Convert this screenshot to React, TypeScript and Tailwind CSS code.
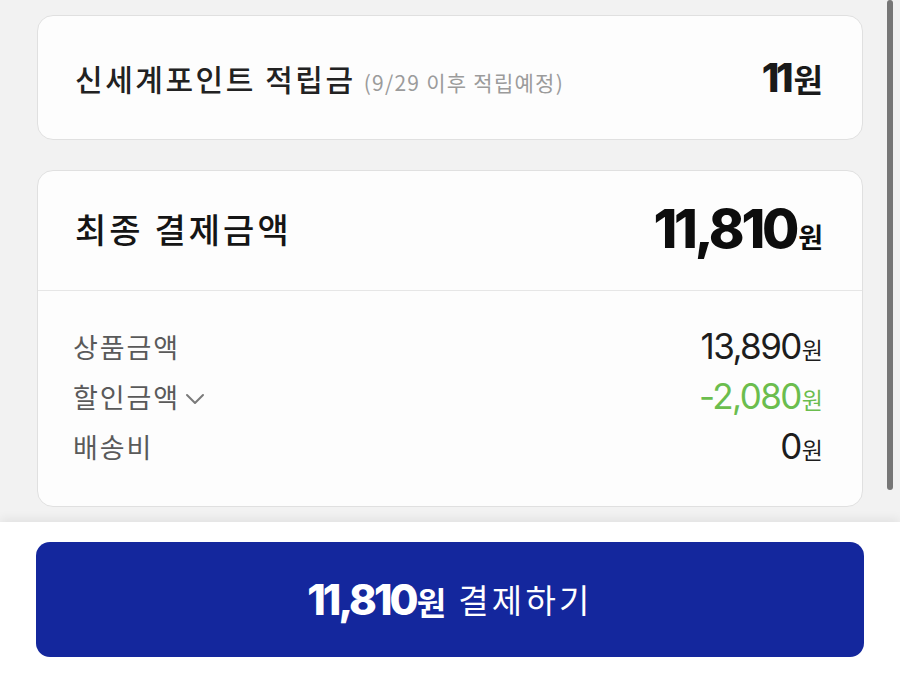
import React from "react";

const kr = { fontFamily: '"Noto Sans CJK KR", "Noto Sans", sans-serif' };
const num = { fontFamily: 'Inter, "Noto Sans CJK KR", sans-serif' };

function Won({ className }: { className: string }) {
  return (
    <span className={className} style={kr}>
      원
    </span>
  );
}

function Row({
  label,
  value,
  green,
  chevron,
}: {
  label: string;
  value: string;
  green?: boolean;
  chevron?: boolean;
}) {
  const color = green ? "text-[#6bbd4e]" : "text-[#1d1d1d]";
  return (
    <div className="flex h-[50px] items-center justify-between">
      <div
        className="flex items-center text-[27px] leading-none tracking-[0.07em] text-[#5a5a5a]"
        style={kr}
      >
        <span>{label}</span>
        {chevron && (
          <svg width="22" height="14" viewBox="0 0 22 14" className="ml-[4px] mt-[6px]">
            <polyline
              points="3,3 11,11 19,3"
              fill="none"
              stroke="#7a7a7a"
              strokeWidth="2"
              strokeLinecap="round"
              strokeLinejoin="round"
            />
          </svg>
        )}
      </div>
      <div className={`flex items-baseline ${color}`}>
        <span className="text-[35px] leading-none tracking-[-0.045em]" style={num}>
          {value}
        </span>
        <Won className="ml-[1px] text-[23px] leading-none" />
      </div>
    </div>
  );
}

export default function App() {
  return (
    <div className="relative flex h-[676px] w-[900px] flex-col overflow-hidden bg-[#f2f2f2]">
      <div className="flex flex-1 flex-col gap-[30px] pl-[37px] pr-[37px] pt-[15px]">
        <div className="flex h-[125px] items-center justify-between rounded-[16px] border border-[#e0e0e0] bg-[#fdfdfd] pl-[37px] pr-[39px]">
          <div className="flex items-baseline" style={kr}>
            <span className="text-[30px] font-medium leading-none tracking-[0.085em] text-[#222]">
              신세계포인트 적립금
            </span>
            <span className="ml-[8px] text-[21px] leading-none tracking-[0.06em] text-[#9b9b9b]">
              (9/29 이후 적립예정)
            </span>
          </div>
          <div className="flex items-baseline text-[#1a1a1a]">
            <span className="text-[40px] font-extrabold leading-none tracking-[-0.08em]" style={num}>
              11
            </span>
            <Won className="ml-[3px] text-[32px] font-bold leading-none" />
          </div>
        </div>

        <div className="flex h-[337px] flex-col rounded-[16px] border border-[#e0e0e0] bg-[#fdfdfd]">
          <div className="flex h-[120px] items-center justify-between border-b border-[#e6e6e6] pb-[4px] pl-[37px] pr-[39px]">
            <span
              className="text-[34px] font-medium leading-none tracking-[0.09em] text-[#151515]"
              style={kr}
            >
              최종 결제금액
            </span>
            <div className="flex items-baseline text-[#0d0d0d]">
              <span className="text-[54px] font-extrabold leading-none tracking-[-0.06em]" style={num}>
                11,810
              </span>
              <Won className="ml-[2px] text-[27px] font-bold leading-none" />
            </div>
          </div>
          <div className="flex flex-col pl-[35px] pr-[39px] pt-[30px]">
            <Row label="상품금액" value="13,890" />
            <Row label="할인금액" value="-2,080" green chevron />
            <Row label="배송비" value="0" />
          </div>
        </div>
      </div>

      <div className="h-[154px] bg-white px-[36px] pt-[20px] shadow-[0_-3px_10px_rgba(0,0,0,0.07)]">
        <button className="flex h-[115px] w-full items-center justify-center rounded-[14px] bg-[#14279d] text-white">
          <span className="flex items-baseline">
            <span className="text-[42px] font-extrabold leading-none tracking-[-0.07em]" style={num}>
              11,810
            </span>
            <span className="ml-[1px] text-[32px] font-bold leading-none" style={kr}>
              원
            </span>
          </span>
          <span className="ml-[12px] text-[33px] leading-none tracking-[0.1em]" style={kr}>
            결제하기
          </span>
        </button>
      </div>

      <div className="absolute right-[7px] top-0 h-[490px] w-[6px] rounded-full bg-[#777]" />
    </div>
  );
}
